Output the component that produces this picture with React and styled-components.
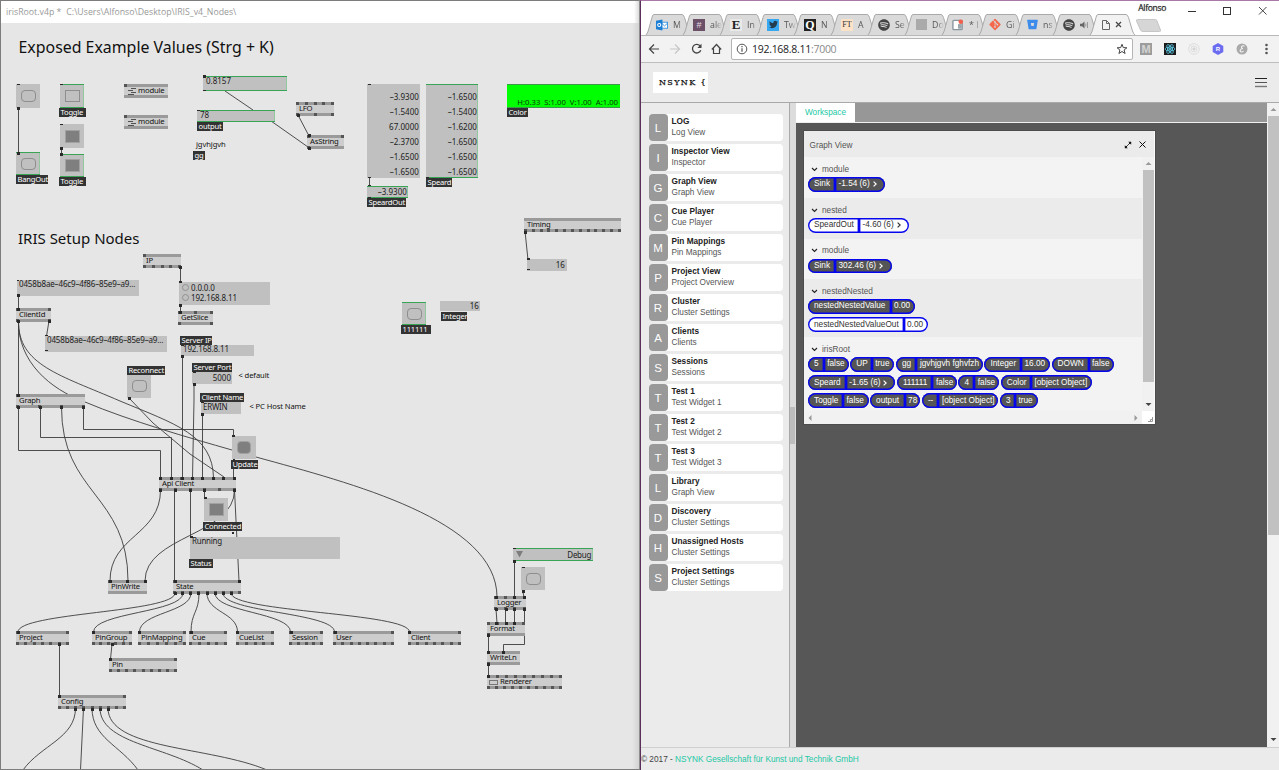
import React from "react";
import styled, { createGlobalStyle, css } from "styled-components";
import { FaTwitter, FaSpotify, FaGitAlt, FaBitbucket } from "react-icons/fa";

const Global = createGlobalStyle`
  * { box-sizing: border-box; }
  html, body { margin: 0; padding: 0; background: #fff; overflow: hidden; }
`;

const sans = `"Liberation Sans", Arial, sans-serif`;
const human = `"Noto Sans", "Open Sans", sans-serif`;

const Desktop = styled.div`
  display: flex;
  width: 1279px;
  height: 770px;
  overflow: hidden;
`;

/* ---------- patch editor ---------- */

const PatchWindow = styled.section`
  width: 640px;
  flex: none;
  display: flex;
  flex-direction: column;
  border: 1px solid #7d7d7d;
  border-right-color: #8f8f8f;
  font-family: ${human};
`;

const PatchTitle = styled.header`
  height: 22px;
  flex: none;
  padding: 0 0 0 5px;
  display: flex;
  align-items: center;
  gap: 5px;
  background: linear-gradient(to left, #dcdcdc, #fff 5px);
  color: #999;
  font: 8.75px/22px "Open Sans", sans-serif;
  white-space: pre;
`;

const Canvas = styled.div`
  position: relative;
  flex: 1;
  overflow: hidden;
  background: linear-gradient(to left, #d3d3d3, #e6e6e6 7px);
`;

const World = styled.div`
  position: absolute;
  left: -1px;
  top: -23px;
  width: 640px;
  height: 770px;
`;

const Layer = styled.svg`
  position: absolute;
  left: 0;
  top: 0;
`;

const Placed = styled.div`
  position: absolute;
  left: ${(p) => p.$x}px;
  top: ${(p) => p.$y}px;
  width: ${(p) => (p.$w ? `${p.$w}px` : "auto")};
  height: ${(p) => (p.$h ? `${p.$h}px` : "auto")};
`;

const Heading = styled(Placed)`
  font-size: ${(p) => p.$size}px;
  line-height: 20px;
  color: #111;
  white-space: nowrap;
`;

const Note = styled(Placed)`
  font-size: 7.6px;
  line-height: 9px;
  letter-spacing: -0.1px;
  color: #111;
  white-space: nowrap;
`;

const Tag = styled(Placed)`
  height: 9px;
  padding-left: 1.5px;
  background: #333;
  color: #fff;
  font-size: 7.6px;
  line-height: 8px;
  letter-spacing: -0.2px;
  white-space: nowrap;
`;

const NodeBox = styled(Placed)`
  height: 14px;
  display: flex;
  flex-direction: column;
  background: #cdcdcd;
`;

const PinBar = styled.div`
  height: 3px;
  flex: none;
  display: flex;
  justify-content: space-between;
  background: #9a9a9a;
`;

const Pin = styled.i`
  width: 3px;
  height: 3px;
  background: ${(p) => (p.$off ? "transparent" : "#555")};
`;

const NodeLabel = styled.div`
  height: 8px;
  flex: none;
  display: flex;
  align-items: center;
  gap: 2px;
  padding-left: ${(p) => p.$pad}px;
  font-size: 7.7px;
  line-height: 7px;
  letter-spacing: -0.22px;
  color: #111;
  white-space: nowrap;
`;

const NodeText = styled.span`
  margin-top: -1px;
`;

const IoBox = styled(Placed)`
  background: #c0c0c0;
  padding: ${(p) => p.$pad || "0 2px"};
  font-size: 8px;
  line-height: ${(p) => p.$lh || 8}px;
  letter-spacing: ${(p) => p.$ls ?? 0}px;
  text-align: ${(p) => p.$align || "left"};
  color: #222;
  white-space: nowrap;
  ${(p) =>
    p.$green &&
    css`
      box-shadow: inset 0 1px #3aa455, inset 0 -1px #3aa455, inset -1px 0 #93c79f;
    `}
`;

const ColorBox = styled(Placed)`
  display: flex;
  justify-content: flex-end;
  align-items: flex-end;
  gap: 4px;
  padding: 0 2px 0 0;
  background: #00ff00;
  border-top: 1px solid #3a9a4a;
  border-bottom: 1px solid #3a9a4a;
  font-size: 7.7px;
  line-height: 10px;
  color: #0a3a0a;
  white-space: nowrap;
`;

const Choice = styled.div`
  display: flex;
  align-items: center;
  gap: 2px;
  height: 10px;
  &::before {
    content: "";
    width: 5px;
    height: 5px;
    border: 1px solid #909090;
    border-radius: 50%;
  }
`;

const Button = styled(Placed)`
  width: 24px;
  height: ${(p) => p.$bh || 24}px;
  background: #c0c0c0;
  display: flex;
  align-items: center;
  justify-content: center;
  ${(p) =>
    p.$green &&
    css`
      box-shadow: inset 0 1px #3aa455, inset 0 -1px #3aa455, inset -1px 0 #93c79f;
    `}
  &::after {
    content: "";
    width: ${(p) => (p.$round && p.$on ? 12 : 13)}px;
    height: ${(p) => (p.$on ? 11 : 10)}px;
    border: 1px solid ${(p) => (p.$on ? "#a2a2a2" : "#8e8e8e")};
    border-radius: ${(p) => (p.$round ? "4px" : "0")};
    background: ${(p) => (p.$on ? "#7f7f7f" : "transparent")};
  }
`;

function pins(n) {
  if (!n) return null;
  if (n === 1) return <Pin />;
  if (Array.isArray(n)) return n.map((v, i) => <Pin key={i} $off={!v} />);
  return Array.from({ length: n }, (_, i) => <Pin key={i} />);
}

function Node({ x, y, w, label, ins, outs, icon, pad = 3 }) {
  return (
    <NodeBox $x={x} $y={y} $w={w}>
      <PinBar>{pins(ins)}</PinBar>
      <NodeLabel $pad={pad}>
        {icon}
        <NodeText>{label}</NodeText>
      </NodeLabel>
      <PinBar>{pins(outs)}</PinBar>
    </NodeBox>
  );
}

const moduleIcon = (
  <svg width="8" height="7" viewBox="0 0 8 7" fill="none" stroke="#444">
    <path d="M3 .5H8M0 2.5H5M3 4.5H8M0 6.5H6" strokeWidth=".9" />
  </svg>
);
const rendererIcon = (
  <svg width="9" height="5" viewBox="0 0 9 5" fill="none" stroke="#777">
    <rect x=".5" y=".5" width="8" height="4" />
  </svg>
);

const NODES = [
  { x: 124, y: 84, w: 44, label: "module", icon: moduleIcon, pad: 4, ins: 1 },
  { x: 124, y: 115, w: 44, label: "module", icon: moduleIcon, pad: 4, ins: 1 },
  { x: 296, y: 102, w: 38, label: "LFO", ins: 5, outs: 3 },
  { x: 307, y: 135, w: 37, label: "AsString", ins: 2, outs: 1 },
  { x: 524, y: 218, w: 97, label: "Timing", outs: 13 },
  { x: 143, y: 254, w: 38, label: "IP", ins: 1, outs: 5 },
  { x: 16, y: 308, w: 35, label: "ClientId", ins: 2, outs: 2 },
  { x: 178, y: 311, w: 35, label: "GetSlice", ins: 3, outs: 2 },
  { x: 16, y: 394, w: 69, label: "Graph", ins: 1, outs: 4 },
  { x: 159, y: 477, w: 77, label: "Api Client", ins: 8, outs: 6 },
  { x: 108, y: 580, w: 39, label: "PinWrite", ins: 3 },
  { x: 173, y: 580, w: 68, label: "State", ins: 2, outs: 9 },
  { x: 16, y: 631, w: 53, label: "Project", ins: 2, outs: 7 },
  { x: 92, y: 631, w: 40, label: "PinGroup", ins: 2, outs: 6 },
  { x: 138, y: 631, w: 48, label: "PinMapping", ins: 2, outs: 6 },
  { x: 189, y: 631, w: 38, label: "Cue", ins: 2, outs: 5 },
  { x: 236, y: 631, w: 38, label: "CueList", ins: 2, outs: 5 },
  { x: 289, y: 631, w: 34, label: "Session", ins: 2, outs: 5 },
  { x: 333, y: 631, w: 61, label: "User", ins: 2, outs: 8 },
  { x: 408, y: 631, w: 53, label: "Client", ins: 2, outs: 7 },
  { x: 109, y: 658, w: 68, label: "Pin", ins: 2, outs: 9 },
  { x: 58, y: 695, w: 68, label: "Config", ins: 2, outs: 9 },
  { x: 494, y: 596, w: 32, label: "Logger", ins: 4, outs: 4 },
  { x: 487, y: 622, w: 38, label: "Format", ins: 5, outs: 1 },
  { x: 487, y: 651, w: 33, label: "WriteLn", ins: [1, 1, 0], outs: 1 },
  { x: 487, y: 675, w: 75, label: "Renderer", icon: rendererIcon, pad: 2, ins: 9, outs: 10 },
];

const TAGS = [
  [16, 175, 32, "BangOut"],
  [59, 108, 27, "Toggle"],
  [59, 177, 27, "Toggle"],
  [197, 122, 26, "output"],
  [193, 151, 12, "gg"],
  [426, 178, 26, "Speard"],
  [367, 198, 39, "SpeardOut"],
  [507, 108, 21, "Color"],
  [401, 325, 30, "111111"],
  [441, 312, 26, "Integer"],
  [180, 336, 32, "Server IP"],
  [192, 363, 40, "Server Port"],
  [200, 393, 44, "Client Name"],
  [127, 366, 38, "Reconnect"],
  [231, 460, 27, "Update"],
  [203, 522, 39, "Connected"],
  [189, 559, 24, "Status"],
];

const BUTTONS = [
  { $x: 16, $y: 84, $round: true },
  { $x: 16, $y: 152, $bh: 23, $round: true, $green: true },
  { $x: 60, $y: 84, $green: true },
  { $x: 60, $y: 124, $on: true },
  { $x: 60, $y: 154, $bh: 23, $on: true, $green: true },
  { $x: 402, $y: 302, $bh: 23, $round: true, $green: true },
  { $x: 127, $y: 374, $round: true },
  { $x: 232, $y: 436, $bh: 23, $round: true, $on: true },
  { $x: 204, $y: 498, $bh: 23, $on: true },
  { $x: 521, $y: 567, $bh: 23, $round: true },
];

/* A link leaves its outlet and reaches its inlet vertically. */
const link = (x1, y1, x2, y2) => {
  const m = (y1 + y2) / 2;
  return `M${x1} ${y1}C${x1} ${m} ${x2} ${m} ${x2} ${y2}`;
};

const WIRES = [
  "M18.5 108V152",
  "M61.5 149V154",
  "M225 91L253 110",
  "M271 121L308 147",
  "M298 115L309 136",
  "M369.5 178V187",
  "M525 231L528 260",
  "M180.5 267V283",
  "M180.5 304V312",
  "M18.5 294V309",
  "M18.5 321V395",
  "M49 321L46.5 336",
  "M18.5 321C18 365 60 375 120 401C175 424 213 435 213.5 478",
  "M18.5 321C18 362 50 389 85 402C130 421 190 438 232 450L256 457C350 483 497 520 497 597",
  "M129 398L153 423L190 454L224 477",
  "M182.5 355V478",
  "M194 383V400L192.5 478",
  "M202.5 414V478",
  "M18.5 407V450.5H160.5V478",
  "M40.5 407V437.5H171.5V478",
  link(61.5, 407, 128, 581),
  "M83.5 407V429.5H233.5V478",
  link(160.5, 490, 110, 581),
  "M174.5 490V581",
  "M190.5 490V538",
  "M204.5 490V499",
  "M234.5 490L239 581",
  link(234.5, 490, 145, 581),
  link(175, 593, 18, 632),
  link(183, 593, 93.5, 632),
  link(191, 593, 139.5, 632),
  link(199, 593, 191, 632),
  link(207, 593, 237.5, 632),
  link(215, 593, 290.5, 632),
  link(223, 593, 334.5, 632),
  link(231, 593, 409.5, 632),
  "M59.5 644V696",
  "M112 644L110.5 659",
  "M75.5 708C75.5 738 41 745 23 770",
  "M83.5 708L80.5 770",
  "M92 708C92 738 120 745 138 770",
  "M100 708C100 743 165 746 203 770",
  "M108 708C108 750 210 746 267 770",
  "M514.5 560V597",
  "M522.5 590L524 597",
  "M496 609L497 623",
  "M505.5 609V623",
  "M514.5 609V623",
  "M524.5 609V644.5H503.5V652",
  "M488.5 635V652",
  "M488.5 664V676",
];

const ENDS = [
  [17, 84, 3, 1], [17, 107], [17, 152], [60, 84, 3, 1], [60, 124, 3, 1], [60, 147], [60, 153],
  [203, 75], [203, 90, 3, 1], [197, 110, 3, 1], [297, 114], [308, 134], [308, 147], [368, 84, 3, 1],
  [368, 177, 3, 1], [368, 185, 3, 1], [368, 197, 3, 1], [426, 177, 3, 1], [524, 231], [527, 258, 3, 2], [527, 269, 3, 1],
  [179, 266], [179, 281, 3, 2], [179, 304], [179, 311], [17, 280, 2, 1], [17, 294], [17, 308], [17, 320],
  [48, 320], [45, 335, 3, 1], [45, 350, 3, 1], [17, 394], [181, 345, 3, 1], [181, 355], [193, 371, 3, 2],
  [193, 383], [201, 402, 3, 1], [201, 413], [128, 397], [232, 435, 3, 2], [233, 459, 2, 2], [17, 406], [39, 406],
  [60, 406], [82, 406], [159, 477], [170, 477], [181, 477], [191, 477], [201, 477], [212, 477],
  [222, 477], [233, 477], [159, 489], [174, 489], [189, 489], [203, 489], [233, 489], [204, 497, 3, 2],
  [190, 536, 3, 2], [232, 532, 2, 2], [109, 580], [126, 580], [144, 580], [174, 580], [238, 580],
  [174, 592], [181, 592], [189, 592], [197, 592], [206, 592], [214, 592], [222, 592], [230, 592],
  [17, 631], [92, 631], [138, 631], [190, 631], [236, 631], [290, 631], [334, 631], [408, 631],
  [58, 643], [111, 643], [109, 658], [58, 695], [74, 708], [82, 708], [91, 708], [99, 708], [107, 708],
  [513, 548, 3, 1], [513, 560], [522, 567, 3, 1], [522, 590], [495, 596], [513, 596], [523, 596],
  [495, 608], [505, 608], [513, 608], [523, 608], [495, 622], [505, 622], [513, 622], [487, 634],
  [487, 651], [502, 651], [487, 663], [487, 675],
];

const spreadA = ["-3.9300", "-1.5400", "67.0000", "-2.3700", "-1.6500", "-1.6500"];
const spreadB = ["-1.6500", "-1.5400", "-1.6200", "-1.6500", "-1.6500", "-1.6500"];
const minus = (s) => s.replace(/-/g, "–");

function Patch() {
  return (
    <PatchWindow>
      <PatchTitle>
        <span>irisRoot.v4p *</span>
        <span>C:\Users\Alfonso\Desktop\IRIS_v4_Nodes\</span>
      </PatchTitle>
      <Canvas>
        <World>
          <Layer width="640" height="770" fill="none" stroke="#3c3c3c" strokeWidth="0.9">
            {WIRES.map((d, i) => (
              <path key={i} d={d} />
            ))}
          </Layer>
          <Heading $x={18.5} $y={37} $size={15.9}>Exposed Example Values (Strg + K)</Heading>
          <Heading $x={18} $y={228} $size={15}>IRIS Setup Nodes</Heading>
          {BUTTONS.map((b, i) => (
            <Button key={i} {...b} />
          ))}
          <IoBox $x={203} $y={76} $w={84} $h={15} $green $pad="1px 3px">0.8157</IoBox>
          <IoBox $x={197} $y={110} $w={78} $h={12} $green $pad="1px 3px">78</IoBox>
          <IoBox $x={367} $y={84} $w={53} $h={94} $align="right" $pad="5px 1px" $lh={15} $ls={0.05}>
            {spreadA.map((v, i) => <div key={i}>{minus(v)}</div>)}
          </IoBox>
          <IoBox $x={426} $y={84} $w={52} $h={94} $align="right" $pad="5px 1px" $lh={15} $green $ls={0.05}>
            {spreadB.map((v, i) => <div key={i}>{minus(v)}</div>)}
          </IoBox>
          <IoBox $x={367} $y={186} $w={41} $h={12} $align="right" $green $pad="2px 1px" $ls={0.05}>{minus("-3.9300")}</IoBox>
          <ColorBox $x={507} $y={84} $w={113} $h={24}>
            <span>H:0.33</span><span>S:1.00</span><span>V:1.00</span><span>A:1.00</span>
          </ColorBox>
          <IoBox $x={527} $y={259} $w={40} $h={12} $align="right" $pad="2px 2px" $ls={0.1}>16</IoBox>
          <IoBox $x={440} $y={301} $w={40} $h={10} $align="right" $pad="1px 1px" $ls={0.1}>16</IoBox>
          <IoBox $x={17} $y={280} $w={122} $h={16} $ls={-0.15}>{minus("0458b8ae-46c9-4f86-85e9-a9...")}</IoBox>
          <IoBox $x={45} $y={336} $w={122} $h={16} $ls={-0.15}>{minus("0458b8ae-46c9-4f86-85e9-a9...")}</IoBox>
          <IoBox $x={179} $y={282} $w={91} $h={23} $pad="0.5px 3px" $lh={9} $ls={-0.15}>
            <Choice>0.0.0.0</Choice>
            <Choice>192.168.8.11</Choice>
          </IoBox>
          <IoBox $x={181} $y={345} $w={73} $h={11} $ls={-0.15}>192.168.8.11</IoBox>
          <IoBox $x={192} $y={372} $w={40} $h={12} $align="right" $pad="2px 1px">5000</IoBox>
          <IoBox $x={201} $y={402} $w={40} $h={12} $pad="1px 2px" $ls={-0.25}>ERWIN</IoBox>
          <IoBox $x={190} $y={537} $w={150} $h={22} $ls={-0.25}>Running</IoBox>
          <IoBox $x={513} $y={548} $w={80} $h={13} $green $align="right" $pad="3px 2px" $ls={-0.3}>Debug</IoBox>
          <Note $x={196} $y={140}>jgvhjgvh</Note>
          <Note $x={238.5} $y={371}>&lt; default</Note>
          <Note $x={249.5} $y={402}>&lt; PC Host Name</Note>
          {NODES.map((n, i) => (
            <Node key={i} {...n} />
          ))}
          {TAGS.map(([x, y, w, t], i) => (
            <Tag key={i} $x={x} $y={y} $w={w}>{t}</Tag>
          ))}
          <Layer width="640" height="770" fill="#2a2a2a">
            {ENDS.map(([x, y, w = 3, h = 3], i) => (
              <rect key={i} x={x} y={y} width={w} height={h} />
            ))}
            <path d="M516 551H523L519.5 557.5Z" fill="#7d7d7d" />
          </Layer>
        </World>
      </Canvas>
    </PatchWindow>
  );
}

/* ---------- browser chrome ---------- */

const Browser = styled.section`
  flex: 1;
  min-width: 0;
  display: flex;
  flex-direction: column;
  border-top: 1px solid #a878a6;
  border-left: 1px solid #5c2e5c;
  background: #fff;
  font-family: ${sans};
  font-size: 8.25px;
`;

const TitleStrip = styled.div`
  height: 34px;
  flex: none;
  display: flex;
  align-items: flex-end;
  padding-left: 5px;
  position: relative;
`;

const TabItem = styled.div`
  position: relative;
  width: ${(p) => (p.$active ? 45 : 37)}px;
  height: 21px;
  flex: none;
  display: flex;
  align-items: center;
  gap: 5px;
  padding-left: 10px;
  z-index: ${(p) => (p.$active ? 2 : 1)};
`;

const TabShape = styled.svg`
  position: absolute;
  left: -1px;
  top: 0;
`;

const TabText = styled.span`
  position: relative;
  white-space: nowrap;
  font: 8.8px/12px "Open Sans", sans-serif;
  color: #555;
  mask-image: linear-gradient(to right, #000 5px, rgba(0, 0, 0, 0.15) 11px);
`;

const Favicon = styled.span`
  position: relative;
  width: 12px;
  height: 12px;
  flex: none;
  display: flex;
  align-items: center;
  justify-content: center;
  background: ${(p) => p.$bg || "transparent"};
  color: ${(p) => p.$fg || "#fff"};
  font: ${(p) => p.$font || `bold 9px/12px ${sans}`};
`;

const NewTab = styled.svg`
  margin: 0 0 3px 0;
`;

const WindowControls = styled.div`
  position: absolute;
  right: 12px;
  top: 2px;
  display: flex;
  align-items: center;
  height: 16px;
`;

const UserName = styled.span`
  margin-right: 21px;
  font: 8.6px/10px "Open Sans", sans-serif;
  color: #222;
  text-shadow: 0 0 1px #777;
  letter-spacing: -0.35px;
  align-self: flex-start;
`;

const Toolbar = styled.div`
  height: 28px;
  flex: none;
  display: flex;
  align-items: center;
  background: #f2f2f2;
  border-top: 1px solid #b8b8b8;
  border-bottom: 1px solid #bdbdbd;
  padding: 0 7px 0 7px;
`;

const Nav = styled.div`
  display: flex;
  gap: 7px;
  width: 83px;
`;

const Omnibox = styled.div`
  width: 402px;
  height: 22px;
  display: flex;
  align-items: center;
  border: 1px solid #b5b5b5;
  border-radius: 2px;
  background: #fff;
  padding: 0 4px;
  color: #8a8a8a;
  font: 10.5px/20px "Open Sans", sans-serif;
  letter-spacing: -0.28px;
`;

const Host = styled.span`
  margin-left: 4px;
  color: #222;
`;

const Spacer = styled.span`
  flex: 1;
`;

const Extensions = styled.div`
  flex: 1;
  display: flex;
  align-items: center;
  justify-content: space-between;
  padding: 0 0 0 7px;
`;

function ChromeTab({ icon, text, active, children }) {
  return (
    <TabItem $active={active}>
      <TabShape width="47" height="21" viewBox="0 0 47 21">
        <path
          d="M1 21Q2.5 19 3.2 17L7 3.500Q7.500 .5 9 .5H37Q38.500 .5 39.500 3.500L43.500 17Q44.500 20 46 21"
          fill={active ? "#f2f2f2" : "#dadada"}
          stroke="#a9a9a9"
        />
      </TabShape>
      {icon}
      {text && <TabText>{text}</TabText>}
      {children}
    </TabItem>
  );
}

const outlook = (
  <Favicon>
    <svg width="13" height="12" viewBox="0 0 13 12">
      <rect x="6" y="3" width="6.500" height="6.500" fill="#fff" stroke="#3b93dd" />
      <path d="M6 4L9.300 7L12.500 4" fill="none" stroke="#3b93dd" />
      <path d="M0 1.500L7 0V12L0 10.500Z" fill="#1c7fd6" />
      <circle cx="3.500" cy="6" r="1.700" fill="none" stroke="#fff" strokeWidth="1.100" />
    </svg>
  </Favicon>
);
const twitter = (
  <Favicon $bg="#38a8f0">
    <FaTwitter size={9} color="#253c4c" />
  </Favicon>
);
const spotify = <Favicon $fg="#444"><FaSpotify size={12} /></Favicon>;
const trello = (
  <Favicon>
    <svg width="13" height="12" viewBox="0 0 13 12">
      <rect x="1" y="1" width="10" height="10" rx="1" fill="#fff" stroke="#8a979f" strokeWidth="1.500" />
      <rect x="6.500" y="5" width="4" height="5" fill="#9aa5ac" />
      <circle cx="9.500" cy="2.500" r="2.500" fill="#f2604d" />
    </svg>
  </Favicon>
);
const page = (
  <Favicon>
    <svg width="10" height="12" viewBox="0 0 10 12" fill="none" stroke="#666">
      <path d="M1.500 1.500H5.500L8.500 4.500V10.500H1.500ZM5.500 1.500V4.500H8.500" />
    </svg>
  </Favicon>
);

function ChromeTop() {
  return (
    <>
      <TitleStrip>
        <ChromeTab icon={outlook} text="M" />
        <ChromeTab icon={<Favicon $bg="#6b5068" $fg="#e4d8e4" $font="9px/12px 'Liberation Sans'">#</Favicon>} text="ale" />
        <ChromeTab icon={<Favicon $bg="#e9e9e9" $fg="#222" $font="bold 13px/12px 'Liberation Serif', serif">E</Favicon>} text="In" />
        <ChromeTab icon={twitter} text="Tw" />
        <ChromeTab icon={<Favicon $bg="#222" $font="bold 12px/12px 'Liberation Serif', serif">Q</Favicon>} text="N" />
        <ChromeTab icon={<Favicon $bg="#fde2c8" $fg="#333" $font="8px/12px 'Liberation Serif', serif">FT</Favicon>} text="A" />
        <ChromeTab icon={spotify} text="Se" />
        <ChromeTab icon={<Favicon><svg width="11" height="11"><rect width="11" height="11" fill="#aaa" /></svg></Favicon>} text="Do" />
        <ChromeTab icon={trello} text="* I" />
        <ChromeTab icon={<Favicon $fg="#f4694b"><FaGitAlt size={13} /></Favicon>} text="Gi" />
        <ChromeTab icon={<Favicon $fg="#3d8bea"><FaBitbucket size={11} /></Favicon>} text="ns" />
        <ChromeTab icon={spotify}>
          <svg width="9" height="8" viewBox="0 0 9 8" style={{ position: "relative" }}>
            <path d="M0 2.800H2L4.500 .5V7.500L2 5.200H0Z" fill="#666" />
            <path d="M5.800 2.500V5.500M7.500 1V7" stroke="#999" fill="none" />
          </svg>
        </ChromeTab>
        <ChromeTab active icon={page}>
          <svg width="7" height="7" viewBox="0 0 7 7" stroke="#444" strokeWidth="1.200" style={{ position: "relative", marginLeft: -2 }}>
            <path d="M1 1L6 6M6 1L1 6" />
          </svg>
        </ChromeTab>
        <NewTab width="27" height="13" viewBox="0 0 27 13">
          <path d="M2.500 .5H20.500Q21.500 .5 22 2L25.500 11Q26 12.500 24.500 12.500H8Q6 12.500 5.500 11L1.500 2Q1 .5 2.500 .5Z" fill="#d6d6d6" stroke="#c6c6c6" />
        </NewTab>
        <WindowControls>
          <UserName>Alfonso</UserName>
          <svg width="80" height="10" viewBox="0 0 80 10" fill="none" stroke="#333">
            <path d="M1 5.500H9" />
            <rect x="36.500" y="1.500" width="7" height="7" />
            <path d="M72 1L79.500 8.500M79.500 1L72 8.500" strokeWidth=".9" />
          </svg>
        </WindowControls>
      </TitleStrip>
      <Toolbar>
        <Nav>
          <svg width="14" height="14" viewBox="0 0 14 14" fill="none" stroke="#444" strokeWidth="1.200">
            <path d="M11 7H1.500M6 2.500L1.500 7L6 11.500" />
          </svg>
          <svg width="14" height="14" viewBox="0 0 14 14" fill="none" stroke="#c6c6c6" strokeWidth="1.200">
            <path d="M1 7H10.500M6 2.500L10.500 7L6 11.500" />
          </svg>
          <svg width="14" height="14" viewBox="0 0 14 14" fill="none" stroke="#444" strokeWidth="1.300">
            <path d="M10 3.800A4.300 4.300 0 1 0 10.800 8.200" />
            <path d="M11.500 1.800V6H7.300Z" fill="#444" stroke="none" />
          </svg>
          <svg width="14" height="14" viewBox="0 0 14 14" fill="none" stroke="#444" strokeWidth="1.200">
            <path d="M.8 7.500L5.500 2.500L10.200 7.500M2.500 6.500V11.500H8.500V6.500" />
          </svg>
        </Nav>
        <Omnibox>
          <svg width="12" height="12" viewBox="0 0 12 12" fill="none" stroke="#555">
            <circle cx="6" cy="6" r="4.800" />
            <path d="M6 5.200V8.800M6 3V4.200" strokeWidth="1.200" />
          </svg>
          <Host>192.168.8.11</Host>:7000
          <Spacer />
          <svg width="12" height="12" viewBox="0 0 12 12" fill="none" stroke="#444">
            <path d="M6 1.300L7.300 4.600L10.900 4.800L8.100 7L9.100 10.500L6 8.500L2.900 10.500L3.900 7L1.100 4.800L4.700 4.600Z" />
          </svg>
        </Omnibox>
        <Extensions>
          <Favicon $bg="#9c9c9c" $fg="#d4d4d4" $font={`bold 11px/12px ${sans}`}>M</Favicon>
          <Favicon $bg="#1c1c1c">
            <svg width="12" height="12" viewBox="0 0 12 12" fill="none" stroke="#5ccbe8" strokeWidth=".8">
              <ellipse cx="6" cy="6" rx="5" ry="2" />
              <ellipse cx="6" cy="6" rx="5" ry="2" transform="rotate(60 6 6)" />
              <ellipse cx="6" cy="6" rx="5" ry="2" transform="rotate(120 6 6)" />
              <circle cx="6" cy="6" r=".8" fill="#5ccbe8" />
            </svg>
          </Favicon>
          <Favicon>
            <svg width="12" height="12" viewBox="0 0 12 12" fill="none" stroke="#d8d8d8" strokeWidth=".8">
              <circle cx="6" cy="6" r="5.300" />
              <circle cx="6" cy="6" r="3" />
              <circle cx="6" cy="6" r="1.200" fill="#ccc" />
              <path d="M1.500 1.500L3.500 3.500" />
            </svg>
          </Favicon>
          <Favicon>
            <svg width="12" height="12" viewBox="0 0 12 12">
              <path d="M6 0L11.300 3V9L6 12L.7 9V3Z" fill="#6b6cf0" />
              <text x="6" y="8.300" fontSize="6" fontWeight="bold" textAnchor="middle" fill="#fff">R</text>
            </svg>
          </Favicon>
          <Favicon>
            <svg width="12" height="12" viewBox="0 0 12 12">
              <circle cx="6" cy="6" r="5.500" fill="#a9a9a9" />
              <path d="M8.500 3.200C7 2.200 5 3.200 5.500 4.700C5.700 5.500 6.700 5.500 7 5.500C5 5.500 3.800 6.800 4.200 8C4.700 9.500 7 9 7.500 8" fill="none" stroke="#f3f3f3" strokeWidth="1.100" />
            </svg>
          </Favicon>
          <svg width="12" height="12" viewBox="0 0 12 12" fill="#555">
            <circle cx="6.500" cy="2" r="1.300" />
            <circle cx="6.500" cy="6" r="1.300" />
            <circle cx="6.500" cy="10" r="1.300" />
          </svg>
        </Extensions>
      </Toolbar>
    </>
  );
}

/* ---------- web application ---------- */

const AppHeader = styled.header`
  height: 40px;
  flex: none;
  display: flex;
  align-items: center;
  justify-content: space-between;
  padding: 0 12px 0 12px;
  background: #ebebeb;
  border-bottom: 1px solid #a9a9a9;
`;

const Logo = styled.div`
  width: 55px;
  height: 21px;
  padding-left: 6px;
  background: #fff;
  color: #111;
  font: 8px/21px "DejaVu Serif", serif;
  letter-spacing: 1.35px;
  -webkit-text-stroke: 0.25px #111;
  white-space: nowrap;
`;

const AppBody = styled.div`
  flex: 1;
  min-height: 0;
  display: flex;
`;

const Sidebar = styled.aside`
  width: 149px;
  flex: none;
  padding: 11px 6px 0 8px;
  display: flex;
  flex-direction: column;
  gap: 3.5px;
  background: #ebebeb;
  border-right: 1px solid #a9a9a9;
`;

const Widget = styled.div`
  height: 26.5px;
  flex: none;
  display: flex;
  background: #fff;
  border-radius: 4px;
`;

const WidgetLetter = styled.div`
  width: 19px;
  border-radius: 4px;
  background: #999;
  color: #fff;
  text-align: center;
  font-size: 11.5px;
  line-height: 28px;
  padding-right: 1px;
`;

const WidgetText = styled.div`
  padding: 3px 0 0 3.5px;
  color: #555;
  line-height: 10.5px;
`;

const WidgetName = styled.div`
  font-weight: bold;
  color: #222;
`;

const Splitter = styled.div`
  width: 6px;
  flex: none;
  display: flex;
  align-items: center;
  background: #dcdcdc;
  &::before {
    content: "";
    width: 5px;
    height: 37px;
    background: #bdbdbd;
  }
`;

const Main = styled.main`
  flex: 1;
  min-width: 0;
  display: flex;
  flex-direction: column;
  background: #575757;
`;

const WorkTabs = styled.div`
  height: 20px;
  flex: none;
  display: flex;
  background: #979797;
  border-bottom: 1px solid #f0f0f0;
`;

const WorkTab = styled.div`
  width: 59px;
  background: #fff;
  color: #1cc8a5;
  text-align: center;
  line-height: 20px;
`;

const WorkArea = styled.div`
  flex: 1;
  padding: 8px 0 0 8px;
`;

const Panel = styled.div`
  width: 351px;
  height: 293px;
  display: flex;
  flex-direction: column;
  background: #f3f3f3;
  border: solid #fafafa;
  border-width: 0 1px 0 0;
  color: #555;
  outline: 1px solid #4c4c4c;
`;

const PanelHeader = styled.div`
  height: 26px;
  flex: none;
  display: flex;
  align-items: center;
  gap: 7px;
  padding: 1px 8px 0 5.5px;
  background: #ebebeb;
`;

const PanelTitle = styled.span`
  flex: 1;
  padding-top: 1px;
`;

const PanelBody = styled.div`
  height: 254px;
  flex: none;
  display: flex;
`;

const Sections = styled.div`
  flex: 1;
`;

const Section = styled.div`
  height: ${(p) => p.$h}px;
  padding: 7px 0 0 4px;
  background: ${(p) => (p.$alt ? "#ebebeb" : "#f3f3f3")};
`;

const SectionHead = styled.div`
  display: flex;
  align-items: center;
  gap: 4px;
  height: 10px;
  padding-left: 3px;
  margin-bottom: 3px;
  line-height: 11px;
`;

const PillRow = styled.div`
  display: flex;
  gap: 1.6px;
  height: 18.200px;
`;

const PillCell = styled.span`
  width: ${(p) => p.$w}px;
  height: 14.800px;
  padding-left: ${(p) => (p.$end ? 3.5 : 6)}px;
  display: flex;
  align-items: center;
  gap: 3px;
  line-height: 10px;
  white-space: nowrap;
  color: ${(p) => (p.$light ? "#333" : "#fff")};
  background: ${(p) => (p.$light ? "#fff" : "#555")};
  box-shadow: inset 0 0 0 1.4px #0606ee;
  border-radius: ${(p) => (p.$end ? "0 8px 8px 0" : "8px 0 0 8px")};
`;

const Pill = styled.span`
  display: flex;
`;

const VScroll = styled.div`
  width: ${(p) => p.$w}px;
  flex: none;
  display: flex;
  flex-direction: column;
  align-items: center;
  background: #f1f1f1;
`;

const Thumb = styled.div`
  width: calc(100% - 1px);
  height: ${(p) => p.$h}px;
  background: #c1c1c1;
`;

const ArrowCell = styled.svg`
  flex: none;
  display: block;
`;

const HScroll = styled.div`
  flex: 1;
  display: flex;
  align-items: center;
  justify-content: space-between;
  padding-left: 3px;
  background: #f1f1f1;
`;

const Footer = styled.footer`
  height: 23px;
  flex: none;
  padding-top: 1px;
  background: #ebebeb;
  border-top: 1px solid #cfcfcf;
  color: #444;
  line-height: 21px;
`;

const Teal = styled.span`
  color: #1cc8a5;
`;

const WIDGETS = [
  ["L", "LOG", "Log View"],
  ["I", "Inspector View", "Inspector"],
  ["G", "Graph View", "Graph View"],
  ["C", "Cue Player", "Cue Player"],
  ["M", "Pin Mappings", "Pin Mappings"],
  ["P", "Project View", "Project Overview"],
  ["R", "Cluster", "Cluster Settings"],
  ["A", "Clients", "Clients"],
  ["S", "Sessions", "Sessions"],
  ["T", "Test 1", "Test Widget 1"],
  ["T", "Test 2", "Test Widget 2"],
  ["T", "Test 3", "Test Widget 3"],
  ["L", "Library", "Graph View"],
  ["D", "Discovery", "Cluster Settings"],
  ["H", "Unassigned Hosts", "Cluster Settings"],
  ["S", "Project Settings", "Cluster Settings"],
];

const SECTIONS = [
  { name: "module", h: 41, rows: [[{ n: "Sink", v: "-1.54 (6)", a: 27, b: 50, more: true }]] },
  { name: "nested", h: 40.5, rows: [[{ n: "SpeardOut", v: "-4.60 (6)", a: 51, b: 49.5, more: true, light: true }]] },
  { name: "module", h: 40.5, rows: [[{ n: "Sink", v: "302.46 (6)", a: 27, b: 56.5, more: true }]] },
  {
    name: "nestedNested",
    h: 58,
    rows: [
      [{ n: "nestedNestedValue", v: "0.00", a: 82.5, b: 24.3 }],
      [{ n: "nestedNestedValueOut", v: "0.00", a: 95.5, b: 24.5, light: true }],
    ],
  },
  {
    name: "irisRoot",
    h: 74,
    rows: [
      [
        { n: "5", v: "false", a: 15.7, b: 25 },
        { n: "UP", v: "true", a: 21.5, b: 22.5 },
        { n: "gg", v: "jgvhjgvh fghvfzh", a: 20.5, b: 66.5 },
        { n: "Integer", v: "16.00", a: 36.5, b: 29 },
        { n: "DOWN", v: "false", a: 37, b: 25 },
      ],
      [
        { n: "Speard", v: "-1.65 (6)", a: 37.8, b: 49.5, more: true },
        { n: "111111", v: "false", a: 35.5, b: 24.5 },
        { n: "4", v: "false", a: 15.8, b: 24.9 },
        { n: "Color", v: "[object Object]", a: 30.2, b: 60.7 },
      ],
      [
        { n: "Toggle", v: "false", a: 35, b: 25.5 },
        { n: "output", v: "78", a: 34.5, b: 15.7 },
        { n: "--", v: "[object Object]", a: 16.5, b: 60 },
        { n: "3", v: "true", a: 15, b: 23 },
      ],
    ],
  },
];

function Arrow({ w, h, dir, color = "#999" }) {
  const cx = w / 2;
  const cy = h / 2;
  const d = {
    up: `M${cx - 3} ${cy + 1.5}L${cx} ${cy - 1.5}L${cx + 3} ${cy + 1.5}Z`,
    down: `M${cx - 3} ${cy - 1.5}L${cx} ${cy + 1.5}L${cx + 3} ${cy - 1.5}Z`,
    left: `M${cx + 1.5} ${cy - 3}L${cx - 1.5} ${cy}L${cx + 1.5} ${cy + 3}Z`,
    right: `M${cx - 1.5} ${cy - 3}L${cx + 1.5} ${cy}L${cx - 1.5} ${cy + 3}Z`,
  }[dir];
  return (
    <ArrowCell width={w} height={h}>
      <path d={d} fill={color} />
    </ArrowCell>
  );
}

function GraphPanel() {
  return (
    <Panel>
      <PanelHeader>
        <PanelTitle>Graph View</PanelTitle>
        <svg width="8" height="8" viewBox="0 0 8 8" fill="#111">
          <path d="M4.200 .8H7.200V3.800ZM.8 4.200V7.200H3.800Z" />
          <path d="M1.500 6.500L6.500 1.500" stroke="#111" strokeDasharray="3.200 .7" />
        </svg>
        <svg width="7" height="7" viewBox="0 0 7 7" stroke="#111">
          <path d="M.5 .5L6.500 6.500M6.500 .5L.5 6.500" />
        </svg>
      </PanelHeader>
      <PanelBody>
        <Sections>
          {SECTIONS.map((s, i) => (
            <Section key={i} $h={s.h} $alt={i % 2 === 1}>
              <SectionHead>
                <svg width="7" height="5" viewBox="0 0 7 5" fill="none" stroke="#222" strokeWidth="1.100">
                  <path d="M1 1L3.500 3.500L6 1" />
                </svg>
                {s.name}
              </SectionHead>
              {s.rows.map((row, j) => (
                <PillRow key={j}>
                  {row.map((p, k) => (
                    <Pill key={k}>
                      <PillCell $w={p.a} $light={p.light}>{p.n}</PillCell>
                      <PillCell $w={p.b} $light={p.light} $end>
                        {p.v}
                        {p.more && (
                          <svg width="4" height="6" viewBox="0 0 4 6" fill="none" stroke="currentColor" strokeWidth="1.200">
                            <path d="M.6 .6L3.200 3L.6 5.400" />
                          </svg>
                        )}
                      </PillCell>
                    </Pill>
                  ))}
                </PillRow>
              ))}
            </Section>
          ))}
        </Sections>
        <VScroll $w={12}>
          <Arrow w={11} h={13} dir="up" />
          <Thumb $h={212} />
          <Spacer />
          <Arrow w={11} h={13} dir="down" color="#444" />
        </VScroll>
      </PanelBody>
      <HScroll>
        <Arrow w={6} h={12} dir="left" />
        <Spacer />
        <Arrow w={12} h={12} dir="right" />
        <svg width="12" height="13" viewBox="0 0 12 13">
          <rect width="12" height="13" fill="#fff" />
          <path d="M10.500 6V10.500H6M10.500 8.500H8.500V10.500" fill="none" stroke="#999" />
        </svg>
      </HScroll>
    </Panel>
  );
}

export default function App() {
  return (
    <Desktop>
      <Global />
      <Patch />
      <Browser>
        <ChromeTop />
        <AppHeader>
          <Logo>NSYNK {"{"}</Logo>
          <svg width="12" height="10" viewBox="0 0 12 10" fill="none">
            <path d="M0 .5H12" stroke="#222" />
            <path d="M0 4.500H12" stroke="#555" />
            <path d="M0 8.500H12" stroke="#777" strokeWidth="1.400" />
          </svg>
        </AppHeader>
        <AppBody>
          <Sidebar>
            {WIDGETS.map(([l, name, sub], i) => (
              <Widget key={i}>
                <WidgetLetter>{l}</WidgetLetter>
                <WidgetText>
                  <WidgetName>{name}</WidgetName>
                  {sub}
                </WidgetText>
              </Widget>
            ))}
          </Sidebar>
          <Splitter />
          <Main>
            <WorkTabs>
              <WorkTab>Workspace</WorkTab>
            </WorkTabs>
            <WorkArea>
              <GraphPanel />
            </WorkArea>
          </Main>
          <VScroll $w={12}>
            <Arrow w={11} h={13} dir="up" />
            <Thumb $h={419} />
            <Spacer />
            <Arrow w={11} h={15} dir="down" color="#444" />
          </VScroll>
        </AppBody>
        <Footer>
          © 2017 - <Teal>NSYNK Gesellschaft für Kunst und Technik GmbH</Teal>
        </Footer>
      </Browser>
    </Desktop>
  );
}
